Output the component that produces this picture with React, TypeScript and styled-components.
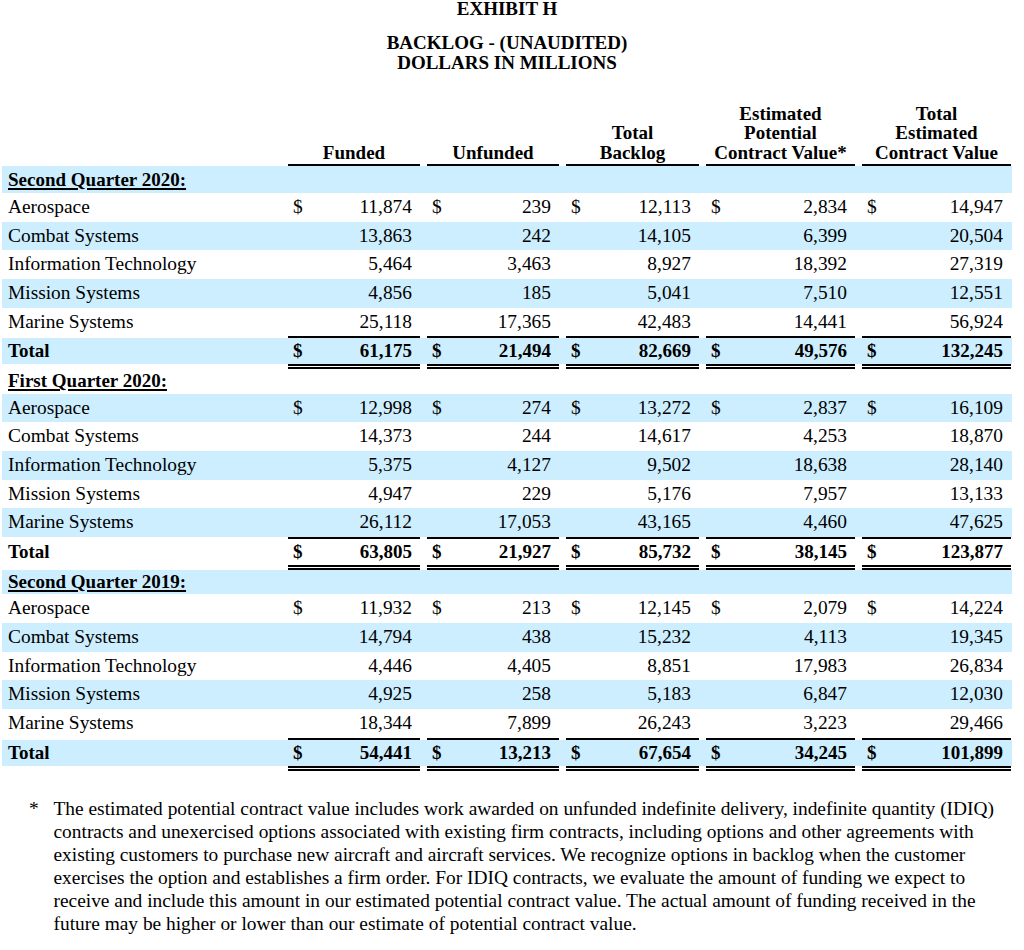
import React from "react";
import styled, { createGlobalStyle, css } from "styled-components";

const Global = createGlobalStyle`
  html, body { margin: 0; padding: 0; background: #fff; }
  body {
    font-family: "Liberation Serif", "Times New Roman", serif;
    font-size: 19.4px;
    color: #000;
  }
`;

const BAND = "#cceeff";
const COLS = "279px 132px 132px 133px 149px 149px";

const Page = styled.div`
  width: 1010px;
  margin: 0 0 0 2px;
`;

const TitleBlock = styled.header`
  text-align: center;
  font-weight: bold;
  font-size: 19px;
  line-height: 18px;
`;

const Subtitle = styled.div`
  margin-top: 15px;
  line-height: 20px;
`;

const HeaderRow = styled.div`
  display: grid;
  grid-template-columns: ${COLS};
  column-gap: 7px;
  align-items: end;
  height: 66px;
  margin-top: 27px;
`;

const HeaderCell = styled.div`
  text-align: center;
  font-weight: bold;
  font-size: 19px;
  line-height: 19.5px;
  padding-bottom: 2px;
  border-bottom: 2px solid #000;
`;

type Kind = "section" | "item" | "total";

const Row = styled.div<{ $shade: boolean; $kind: Kind; $h: number }>`
  display: grid;
  grid-template-columns: ${COLS};
  column-gap: 7px;
  height: ${(p) => p.$h}px;
  line-height: ${(p) => (p.$kind === "total" ? p.$h - 7 : p.$h)}px;
  ${(p) =>
    p.$kind === "total"
      ? css`
          font-weight: bold;
          font-size: 19px;
          background: ${p.$shade
            ? `linear-gradient(${BAND}, ${BAND}) 0 2px / 100% calc(100% - 7px) no-repeat`
            : "none"};
        `
      : css`
          background: ${p.$shade ? BAND : "transparent"};
        `}
`;

const Label = styled.div<{ $kind: Kind }>`
  padding-left: 6px;
  white-space: nowrap;
  ${(p) =>
    p.$kind === "section" &&
    css`
      font-weight: bold;
      font-size: 19px;
      text-decoration: underline;
      text-decoration-thickness: 1.5px;
      text-underline-offset: 2px;
    `}
  ${(p) =>
    p.$kind === "total" &&
    css`
      border-top: 2px solid transparent;
      border-bottom: 5px solid transparent;
    `}
`;

const Money = styled.div<{ $total: boolean }>`
  display: flex;
  justify-content: space-between;
  padding: 0 8px 0 5px;
  white-space: nowrap;
  ${(p) =>
    p.$total &&
    css`
      border-top: 2px solid #000;
      border-bottom: 5px double #000;
    `}
`;

const Footnote = styled.div`
  display: flex;
  margin: 26px 0 0 29px;
  line-height: 23px;
`;

const Star = styled.div`
  flex: 0 0 24.5px;
`;

const NoteText = styled.p`
  margin: 0;
  width: 955px;
`;

type Line = [string, string, string, string, string, string];

const sections: { title: string; rows: Line[] }[] = [
  {
    title: "Second Quarter 2020:",
    rows: [
      ["Aerospace", "11,874", "239", "12,113", "2,834", "14,947"],
      ["Combat Systems", "13,863", "242", "14,105", "6,399", "20,504"],
      ["Information Technology", "5,464", "3,463", "8,927", "18,392", "27,319"],
      ["Mission Systems", "4,856", "185", "5,041", "7,510", "12,551"],
      ["Marine Systems", "25,118", "17,365", "42,483", "14,441", "56,924"],
      ["Total", "61,175", "21,494", "82,669", "49,576", "132,245"],
    ],
  },
  {
    title: "First Quarter 2020:",
    rows: [
      ["Aerospace", "12,998", "274", "13,272", "2,837", "16,109"],
      ["Combat Systems", "14,373", "244", "14,617", "4,253", "18,870"],
      ["Information Technology", "5,375", "4,127", "9,502", "18,638", "28,140"],
      ["Mission Systems", "4,947", "229", "5,176", "7,957", "13,133"],
      ["Marine Systems", "26,112", "17,053", "43,165", "4,460", "47,625"],
      ["Total", "63,805", "21,927", "85,732", "38,145", "123,877"],
    ],
  },
  {
    title: "Second Quarter 2019:",
    rows: [
      ["Aerospace", "11,932", "213", "12,145", "2,079", "14,224"],
      ["Combat Systems", "14,794", "438", "15,232", "4,113", "19,345"],
      ["Information Technology", "4,446", "4,405", "8,851", "17,983", "26,834"],
      ["Mission Systems", "4,925", "258", "5,183", "6,847", "12,030"],
      ["Marine Systems", "18,344", "7,899", "26,243", "3,223", "29,466"],
      ["Total", "54,441", "13,213", "67,654", "34,245", "101,899"],
    ],
  },
];

const headers: React.ReactNode[] = [
  "Funded",
  "Unfunded",
  <>
    Total
    <br />
    Backlog
  </>,
  <>
    Estimated
    <br />
    Potential
    <br />
    Contract Value*
  </>,
  <>
    Total
    <br />
    Estimated
    <br />
    Contract Value
  </>,
];

const ITEM_H = 28.67;
const TOTAL_H = 33;

export default function App() {
  let idx = 0;
  const rows: React.ReactNode[] = [];
  sections.forEach((s, si) => {
    rows.push(
      <Row
        key={`s${si}`}
        $shade={idx % 2 === 0}
        $kind="section"
        $h={si === 0 ? 27 : 2 * ITEM_H - TOTAL_H}
      >
        <Label $kind="section">{s.title}</Label>
      </Row>
    );
    idx++;
    s.rows.forEach((r, ri) => {
      const isTotal = r[0] === "Total";
      const kind: Kind = isTotal ? "total" : "item";
      const showDollar = ri === 0 || isTotal;
      rows.push(
        <Row
          key={`r${si}-${ri}`}
          $shade={idx % 2 === 0}
          $kind={kind}
          $h={isTotal ? TOTAL_H : ITEM_H}
        >
          <Label $kind={kind}>{r[0]}</Label>
          {r.slice(1).map((v, ci) => (
            <Money key={ci} $total={isTotal}>
              <span>{showDollar ? "$" : ""}</span>
              <span>{v}</span>
            </Money>
          ))}
        </Row>
      );
      idx++;
    });
  });

  return (
    <>
      <Global />
      <Page>
        <TitleBlock>
          <div>EXHIBIT H</div>
          <Subtitle>
            BACKLOG - (UNAUDITED)
            <br />
            DOLLARS IN MILLIONS
          </Subtitle>
        </TitleBlock>
        <HeaderRow>
          <div />
          {headers.map((h, i) => (
            <HeaderCell key={i}>{h}</HeaderCell>
          ))}
        </HeaderRow>
        {rows}
      </Page>
      <Footnote>
        <Star>*</Star>
        <NoteText>
          The estimated potential contract value includes work awarded on unfunded indefinite delivery, indefinite
          quantity (IDIQ) contracts and unexercised options associated with existing firm contracts, including options
          and other agreements with existing customers to purchase new aircraft and aircraft services. We recognize
          options in backlog when the customer exercises the option and establishes a firm order. For IDIQ contracts, we
          evaluate the amount of funding we expect to receive and include this amount in our estimated potential
          contract value. The actual amount of funding received in the future may be higher or lower than our estimate
          of potential contract value.
        </NoteText>
      </Footnote>
    </>
  );
}
